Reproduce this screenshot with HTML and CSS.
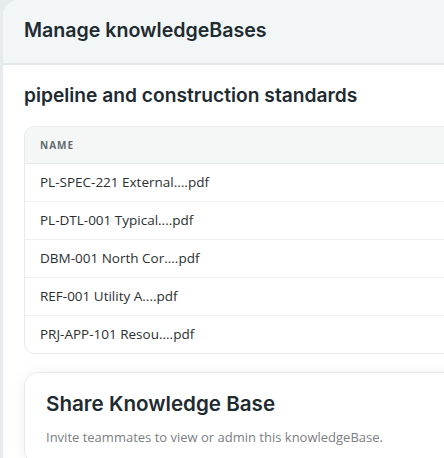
FILE: index.html
```html
<!DOCTYPE html>
<html lang="en">
<head>
<meta charset="UTF-8" />
<title>Manage knowledgeBases</title>
<link rel="stylesheet" href="styles.css">
</head>
<body>
<div class="modal">
  <div class="modal-header">
    <h1>Manage knowledgeBases</h1>
  </div>
  <div class="modal-body">
    <h2>pipeline and construction standards</h2>

    <div class="file-table">
      <div class="file-head">Name</div>
      <div class="file-row">PL-SPEC-221 External....pdf</div>
      <div class="file-row">PL-DTL-001 Typical....pdf</div>
      <div class="file-row">DBM-001 North Cor....pdf</div>
      <div class="file-row">REF-001 Utility A....pdf</div>
      <div class="file-row">PRJ-APP-101 Resou....pdf</div>
    </div>

    <div class="share-card">
      <h3>Share Knowledge Base</h3>
      <p>Invite teammates to view or admin this knowledgeBase.</p>
    </div>
  </div>
</div>
</body>
</html>
```

FILE: styles.css
```css
/* base */
body {
  margin: 0;
  background: #e6ecee;
  font-family: "Open Sans", Arial, sans-serif;
  color: #1f2d33;
  overflow: hidden;
}
.modal {
  margin-left: 3px;
  width: 640px;
  height: 470px;
  background: #fff;
  border-top-left-radius: 16px;
  overflow: hidden;
}
.modal-header {
  background: #f3f6f7;
  border-bottom: 2px solid #e3e9eb;
  display: flex;
  align-items: center;
  padding-left: 21px;
  box-sizing: border-box;
  height: 65px;
}
h1 {
  margin: 0 0 4px;
  font-family: Inter, sans-serif;
  font-size: 19.6px;
  font-weight: 600;
  color: #1e2b31;
}
.modal-body {
  padding: 18px 0 0 21px;
}
h2 {
  margin: 0 0 19px;
  font-family: Inter, sans-serif;
  font-size: 19.2px;
  font-weight: 600;
  color: #1e2b31;
  line-height: 24px;
}
.file-table {
  border: 1px solid #e8eaeb;
  border-radius: 10px;
  overflow: hidden;
}
.file-head {
  height: 36px;
  line-height: 36px;
  background: #f5f6f6;
  padding-left: 15px;
  font-size: 10px;
  font-weight: 700;
  letter-spacing: 1px;
  text-transform: uppercase;
  color: #5f6b70;
  border-bottom: 1px solid #e8eaeb;
}
.file-row {
  height: 37px;
  line-height: 37px;
  padding-left: 15px;
  font-size: 13.5px;
  color: #2b2f31;
  border-bottom: 1px solid #eeeff0;
}
.file-row:last-child {
  border-bottom: none;
}
.share-card {
  margin-top: 18px;
  border: 1px solid #e6eaeb;
  border-radius: 14px;
  padding: 18px 21px;
  box-shadow: 0 0 14px rgba(0, 0, 0, 0.06);
}
h3 {
  margin: 0 0 12px;
  font-family: Inter, sans-serif;
  font-size: 20.6px;
  font-weight: 600;
  color: #1e2b31;
}
.share-card p {
  margin: 0;
  font-size: 13px;
  color: #7a8084;
}
```
